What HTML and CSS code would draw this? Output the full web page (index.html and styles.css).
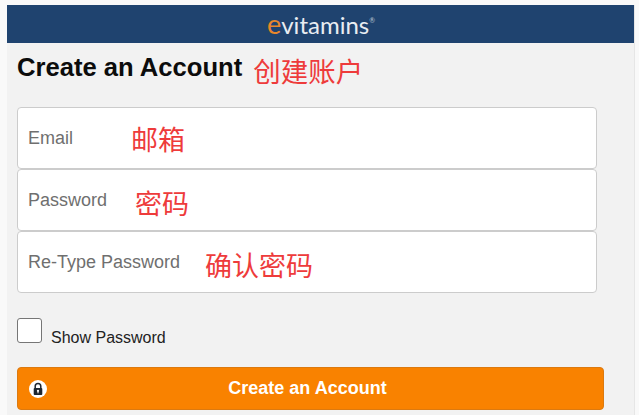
FILE: index.html
```html
<!DOCTYPE html>
<html lang="en">
  <head>
    <meta charset="UTF-8" />
    <title>Create an Account</title>
    <link rel="stylesheet" href="styles.css">
  </head>
  <body>
    <div class="page">
      <div class="top-bar">
        <div class="logo"><span class="logo-e">e</span>vitamins<sup class="logo-reg">®</sup></div>
      </div>
      <div class="content">
        <div class="title-row">
          <h1>Create an Account</h1>
          <span class="note note-title">创建账户</span>
        </div>

        <div class="fields">
          <div class="field">
            <span class="field-label">Email</span>
            <span class="note note-email">邮箱</span>
          </div>
          <div class="field">
            <span class="field-label">Password</span>
            <span class="note note-password">密码</span>
          </div>
          <div class="field">
            <span class="field-label">Re-Type Password</span>
            <span class="note note-retype">确认密码</span>
          </div>
        </div>

        <div class="show-row">
          <span class="check"></span>
          <span class="show-label">Show Password</span>
        </div>

        <div class="btn">
          <svg class="lock" width="18" height="18" viewBox="0 0 18 18">
            <circle cx="9" cy="9" r="9" fill="#fff"/>
            <path d="M6.2 8.5V6.3a2.8 2.8 0 0 1 5.6 0V8.5" fill="none" stroke="#1e2630" stroke-width="1.5"/>
            <rect x="4.7" y="8" width="8.6" height="7" rx="1" fill="#1e2630"/>
            <circle cx="9" cy="10.8" r="1.1" fill="#fff"/>
            <rect x="8.5" y="10.8" width="1" height="2.5" fill="#fff"/>
          </svg>
          Create an Account
        </div>
      </div>
    </div>
  </body>
</html>
```

FILE: styles.css
```css
html, body {
  margin: 0;
  height: 415px;
  overflow: hidden;
}
body {
  font-family: "Liberation Sans", Arial, sans-serif;
  background: #f9f9f9;
  padding: 5px 4px 0 7px;
  box-sizing: border-box;
}
.page {
  background: #f2f2f2;
  height: 410px;
  border-right: 1px solid #e6e6e6;
}
.top-bar {
  background: #1f436f;
  height: 38px;
  display: flex;
  justify-content: center;
  align-items: center;
}
.logo {
  font-family: "Lato", "Liberation Sans", sans-serif;
  font-size: 24px;
  line-height: 38px;
  color: #e9edf2;
  margin-left: 1px;
}
.logo-e {
  font-size: 27px;
  color: #e8872b;
}
.logo-reg {
  font-size: 7px;
  vertical-align: 11px;
  line-height: 0;
  color: #b9c4d2;
}
.content {
  padding: 0 30px 0 10px;
}
.title-row {
  display: flex;
  align-items: center;
  height: 64px;
}
h1 {
  margin: 0 0 16px;
  font-size: 25.6px;
  font-weight: bold;
  color: #0c0c0c;
  line-height: 48px;
}
.note {
  font-family: "Noto Sans CJK SC", sans-serif;
  font-size: 27px;
  color: #ee3b3b;
  line-height: 32px;
}
.note-title {
  font-size: 27.5px;
  margin: 0 0 11px 11px;
}
.field {
  position: relative;
  height: 60px;
  background: #fff;
  border: 1px solid #ccc;
  border-radius: 4px;
  display: flex;
  align-items: center;
  padding-left: 10px;
  width: 568px;
}
.field-label {
  font-size: 18px;
  color: #6f6f6f;
}
.note-email, .note-password, .note-retype {
  position: absolute;
}
.note-email {
  left: 113px;
  top: 15px;
}
.note-password {
  left: 117px;
  top: 17px;
}
.note-retype {
  left: 187px;
  top: 17px;
}
.show-row {
  display: flex;
  align-items: flex-end;
  margin-top: 25px;
}
.check {
  width: 23px;
  height: 23px;
  background: #fff;
  border: 1px solid #767676;
  border-radius: 3px;
}
.show-label {
  font-size: 16px;
  color: #222;
  margin: 0 0 -4px 9px;
}
.btn {
  position: relative;
  box-sizing: border-box;
  margin-top: 24px;
  width: 587px;
  height: 43px;
  background: #f98200;
  border: 1px solid #dc7a10;
  border-radius: 4px;
  color: #fff;
  font-size: 18px;
  font-weight: bold;
  text-align: center;
  line-height: 40px;
  padding-right: 6px;
}
.lock {
  position: absolute;
  left: 11px;
  top: 12px;
}
```
